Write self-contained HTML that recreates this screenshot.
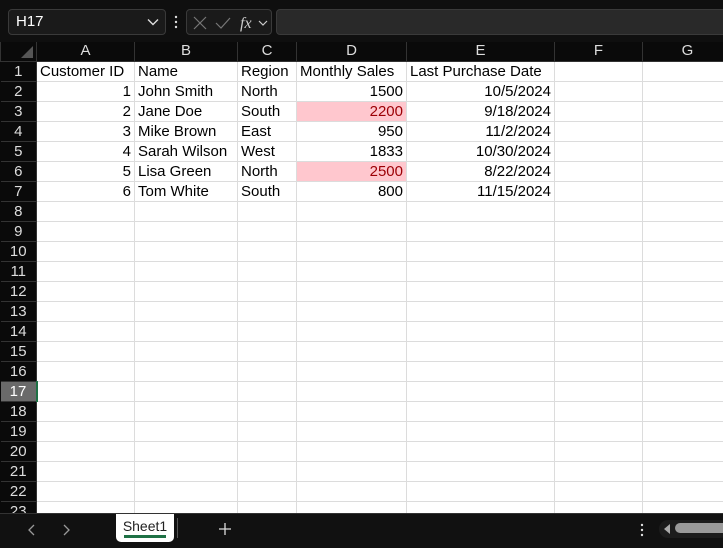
<!DOCTYPE html>
<html><head><meta charset="utf-8"><style>
*{margin:0;padding:0;box-sizing:border-box}
body{width:723px;height:548px;overflow:hidden;background:#0a0a0a;font-family:"Liberation Sans",Arial,sans-serif;position:relative}
.top{position:absolute;left:0;top:0;width:723px;height:42px;background:#0f0f0f}
.nb{position:absolute;left:8px;top:9px;width:158px;height:26px;border:1px solid #3a3a3a;border-radius:4px;background:#1a1a1a;color:#fff;font-size:15px;line-height:24px;padding-left:7px}
.fi{position:absolute;left:186px;top:9px;width:86px;height:26px;border:1px solid #3a3a3a;border-radius:4px;background:#1a1a1a}
.fb{position:absolute;left:276px;top:9px;width:460px;height:26px;border:1px solid #3a3a3a;border-radius:4px;background:#292929}
.grid{position:absolute;left:0;top:42px;border-collapse:collapse;table-layout:fixed;width:732px}
.grid td{height:20px;border:1px solid #dcdcdc;background:#fff;font-size:15px;color:#000;padding:1px 3px 0;white-space:nowrap;overflow:hidden;line-height:18px}
.grid tr.h td{background:#0a0a0a;color:#ddd;text-align:center;border-color:#333;border-top:none;height:19px;padding-top:0}
.grid td.r{background:#0a0a0a;color:#ddd;text-align:center;border-color:#333;border-left:none}
.grid td.sel{background:#6a6a6a;color:#fff;border-right:2px solid #1e7145}
.n{text-align:right}
.p{background:#ffc7ce!important;color:#9c0006!important}
.tabs{position:absolute;left:0;top:513px;width:723px;height:35px;background:#111;border-top:1px solid #333}
.sheet{position:absolute;left:116px;top:0;width:58px;height:28px;background:#fff;border-radius:0 0 5px 5px;font-size:14px;text-align:center;line-height:24px;color:#222}
.sheet i{position:absolute;left:8px;right:8px;bottom:4px;height:3px;background:#1e7145}
</style></head><body>
<div class="top">
<div class="nb">H17<svg style="position:absolute;right:6px;top:8px" width="12" height="8"><path d="M1 1.5l5 5 5-5" stroke="#ddd" stroke-width="1.4" fill="none"/></svg></div>
<svg style="position:absolute;left:174px;top:15px" width="4" height="14"><circle cx="2" cy="2" r="1.2" fill="#ddd"/><circle cx="2" cy="7" r="1.2" fill="#ddd"/><circle cx="2" cy="12" r="1.2" fill="#ddd"/></svg>
<div class="fi"><svg width="86" height="26"><path d="M7 7l12 12M19 7l-12 12" stroke="#777" stroke-width="1.2"/><path d="M29 13l5 5 9-10" stroke="#777" stroke-width="1.2" fill="none"/><text x="53" y="18" font-family="Liberation Serif" font-style="italic" font-size="16" fill="#ccc">fx</text><path d="M72 11l4 4 4-4" stroke="#ccc" stroke-width="1.2" fill="none"/></svg></div>
<div class="fb"></div>
</div>
<table class="grid">
<colgroup><col style="width:36px"><col style="width:98px"><col style="width:103px"><col style="width:59px"><col style="width:110px"><col style="width:148px"><col style="width:88px"><col style="width:90px"></colgroup>
<tr class="h"><td style="position:relative"><svg style="position:absolute;right:3px;bottom:3px" width="12" height="12"><path d="M12 0L12 12L0 12Z" fill="#555"/></svg></td><td>A</td><td>B</td><td>C</td><td>D</td><td>E</td><td>F</td><td>G</td></tr>
<tr><td class="r">1</td><td>Customer ID</td><td>Name</td><td>Region</td><td>Monthly Sales</td><td>Last Purchase Date</td><td></td><td></td></tr>
<tr><td class="r">2</td><td class="n">1</td><td>John Smith</td><td>North</td><td class="n">1500</td><td class="n">10/5/2024</td><td></td><td></td></tr>
<tr><td class="r">3</td><td class="n">2</td><td>Jane Doe</td><td>South</td><td class="n p">2200</td><td class="n">9/18/2024</td><td></td><td></td></tr>
<tr><td class="r">4</td><td class="n">3</td><td>Mike Brown</td><td>East</td><td class="n">950</td><td class="n">11/2/2024</td><td></td><td></td></tr>
<tr><td class="r">5</td><td class="n">4</td><td>Sarah Wilson</td><td>West</td><td class="n">1833</td><td class="n">10/30/2024</td><td></td><td></td></tr>
<tr><td class="r">6</td><td class="n">5</td><td>Lisa Green</td><td>North</td><td class="n p">2500</td><td class="n">8/22/2024</td><td></td><td></td></tr>
<tr><td class="r">7</td><td class="n">6</td><td>Tom White</td><td>South</td><td class="n">800</td><td class="n">11/15/2024</td><td></td><td></td></tr>
<tr><td class="r">8</td><td></td><td></td><td></td><td></td><td></td><td></td><td></td></tr>
<tr><td class="r">9</td><td></td><td></td><td></td><td></td><td></td><td></td><td></td></tr>
<tr><td class="r">10</td><td></td><td></td><td></td><td></td><td></td><td></td><td></td></tr>
<tr><td class="r">11</td><td></td><td></td><td></td><td></td><td></td><td></td><td></td></tr>
<tr><td class="r">12</td><td></td><td></td><td></td><td></td><td></td><td></td><td></td></tr>
<tr><td class="r">13</td><td></td><td></td><td></td><td></td><td></td><td></td><td></td></tr>
<tr><td class="r">14</td><td></td><td></td><td></td><td></td><td></td><td></td><td></td></tr>
<tr><td class="r">15</td><td></td><td></td><td></td><td></td><td></td><td></td><td></td></tr>
<tr><td class="r">16</td><td></td><td></td><td></td><td></td><td></td><td></td><td></td></tr>
<tr><td class="r sel">17</td><td></td><td></td><td></td><td></td><td></td><td></td><td></td></tr>
<tr><td class="r">18</td><td></td><td></td><td></td><td></td><td></td><td></td><td></td></tr>
<tr><td class="r">19</td><td></td><td></td><td></td><td></td><td></td><td></td><td></td></tr>
<tr><td class="r">20</td><td></td><td></td><td></td><td></td><td></td><td></td><td></td></tr>
<tr><td class="r">21</td><td></td><td></td><td></td><td></td><td></td><td></td><td></td></tr>
<tr><td class="r">22</td><td></td><td></td><td></td><td></td><td></td><td></td><td></td></tr>
<tr><td class="r">23</td><td></td><td></td><td></td><td></td><td></td><td></td><td></td></tr>
</table>
<div class="tabs">
<svg style="position:absolute;left:26px;top:9px" width="50" height="14"><path d="M8 2l-5 5 5 5M38 2l5 5-5 5" stroke="#999" stroke-width="1.3" fill="none"/></svg>
<div class="sheet">Sheet1<i></i></div>
<div style="position:absolute;left:177px;top:4px;width:1px;height:20px;background:#555"></div>
<svg style="position:absolute;left:218px;top:8px" width="14" height="14"><path d="M7 1v12M1 7h12" stroke="#ddd" stroke-width="1.3"/></svg>
<svg style="position:absolute;left:640px;top:9px" width="4" height="14"><circle cx="2" cy="2" r="1.2" fill="#ddd"/><circle cx="2" cy="7" r="1.2" fill="#ddd"/><circle cx="2" cy="12" r="1.2" fill="#ddd"/></svg>
<div style="position:absolute;left:659px;top:6px;width:70px;height:18px;border-radius:9px;background:#1c1c1c"></div>
<svg style="position:absolute;left:663px;top:9px" width="8" height="12"><path d="M7 1L1 6l6 5Z" fill="#aaa"/></svg>
<div style="position:absolute;left:675px;top:9px;width:60px;height:10px;border-radius:5px;background:#9a9a9a"></div>
</div>
</body></html>
